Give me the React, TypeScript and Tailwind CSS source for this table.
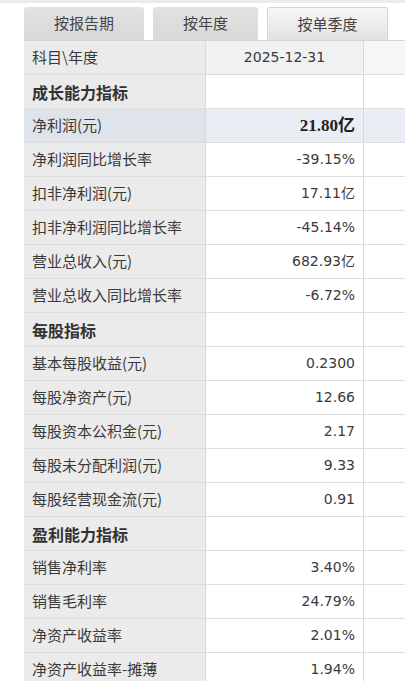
import React from 'react';

type Row = { label: string; value?: string; section?: boolean; highlight?: boolean };

const rows: Row[] = [
  { label: '成长能力指标', section: true },
  { label: '净利润(元)', value: '21.80亿', highlight: true },
  { label: '净利润同比增长率', value: '-39.15%' },
  { label: '扣非净利润(元)', value: '17.11亿' },
  { label: '扣非净利润同比增长率', value: '-45.14%' },
  { label: '营业总收入(元)', value: '682.93亿' },
  { label: '营业总收入同比增长率', value: '-6.72%' },
  { label: '每股指标', section: true },
  { label: '基本每股收益(元)', value: '0.2300' },
  { label: '每股净资产(元)', value: '12.66' },
  { label: '每股资本公积金(元)', value: '2.17' },
  { label: '每股未分配利润(元)', value: '9.33' },
  { label: '每股经营现金流(元)', value: '0.91' },
  { label: '盈利能力指标', section: true },
  { label: '销售净利率', value: '3.40%' },
  { label: '销售毛利率', value: '24.79%' },
  { label: '净资产收益率', value: '2.01%' },
  { label: '净资产收益率-摊薄', value: '1.94%' },
];

const cjk = "font-['Noto_Sans_CJK_SC',sans-serif]";
const num = "font-['DejaVu_Sans','Noto_Sans_CJK_SC',sans-serif]";

function Tab({ label, active, w }: { label: string; active?: boolean; w: string }) {
  return (
    <div
      className={`${w} h-[33px] flex items-center justify-center rounded-t-[3px] text-[15px] text-[#444] ${
        active
          ? 'bg-gradient-to-b from-[#f7f7f7] to-[#e2e2e2] border border-b-0 border-[#d6d6d6]'
          : 'bg-gradient-to-b from-[#e2e2e2] to-[#d8d8d8]'
      }`}
    >
      {label}
    </div>
  );
}

export default function App() {
  return (
    <div className={`w-[405px] h-[681px] overflow-hidden bg-white ${cjk}`}>
      <div className="h-[3px] bg-[#ececec]" />
      <div className="pl-[24px] pt-[4px] flex gap-[9px] items-end">
        <Tab label="按报告期" w="w-[120px]" />
        <Tab label="按年度" w="w-[105px]" />
        <Tab label="按单季度" active w="w-[121px]" />
      </div>
      <div className="ml-[24px] w-[400px] border-t border-[#d4d4d4]">
        <div className="flex h-[34px] border-b border-[#dcdcdc]">
          <div className="w-[182px] shrink-0 bg-[#ebebeb] border-r border-[#d8d8d8] flex items-center pl-[8px] text-[15px] text-[#3a3a3a]">
            科目\年度
          </div>
          <div className={`w-[158px] shrink-0 bg-[#f1f1f1] border-r border-[#d8d8d8] flex items-center justify-center text-[14px] text-[#3a3a3a] ${num}`}>
            2025-12-31
          </div>
          <div className="flex-1 bg-[#f6f6f6]" />
        </div>
        {rows.map((r) => (
          <div key={r.label} className="flex h-[34px] border-b border-[#dedede]">
            <div
              className={`w-[182px] shrink-0 border-r border-[#d8d8d8] flex items-center pl-[8px] ${
                r.highlight ? 'bg-[#dfe4ea]' : 'bg-[#ebebeb]'
              } ${r.section ? 'text-[16px] font-bold text-[#333]' : 'text-[15px] text-[#3a3a3a]'}`}
            >
              {r.label}
            </div>
            <div
              className={`w-[158px] shrink-0 border-r border-[#d8d8d8] flex items-center justify-end pr-[8px] text-[#3a3a3a] ${
                r.highlight ? 'bg-[#e9eef4]' : 'bg-white'
              }`}
            >
              {r.highlight ? (
                <span className="text-[17px] font-bold text-[#222] font-['Liberation_Serif','Noto_Sans_CJK_SC',serif]">
                  {r.value}
                </span>
              ) : (
                <span className={`text-[14px] ${num}`}>{r.value}</span>
              )}
            </div>
            <div className={`flex-1 ${r.highlight ? 'bg-[#e9eef4]' : 'bg-white'}`} />
          </div>
        ))}
      </div>
    </div>
  );
}
